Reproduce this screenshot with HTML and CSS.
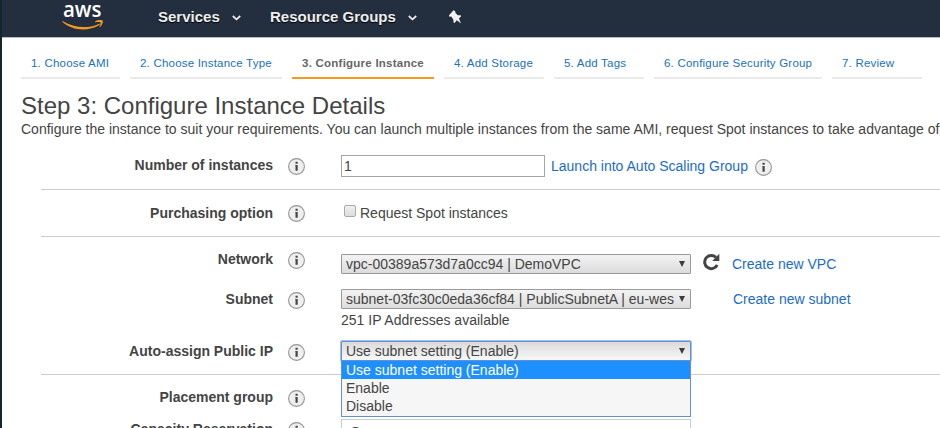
FILE: index.html
```html
<!DOCTYPE html>
<html lang="en">
<head>
<meta charset="utf-8">
<title>Configure Instance Details</title>
<link rel="stylesheet" href="styles.css">
</head>
<body>
<svg class="defs" width="0" height="0" aria-hidden="true">
  <symbol id="info" viewBox="0 0 17 17">
    <circle cx="8.5" cy="8.5" r="7.9" fill="#efefef" stroke="#959595" stroke-width="1.1"/>
    <path d="M7.500 3.700h2.200v2H7.500zM7.100 6.900h2.600v5.900H7.500V7.600h-.4z" fill="#444"/>
  </symbol>
</svg>
<div class="page">
  <header class="topbar">
    <svg class="logo" width="42" height="30" viewBox="0 -4 42 30">
      <text class="logo-text" x="1" y="13.400" textLength="38.500" lengthAdjust="spacingAndGlyphs">aws</text>
      <path d="M1 17.200C11.500 23.800 25.500 25 36.700 19.900c.9-.4 1.500.5.7 1.100C26.500 27.600 10.500 27 .5 18c-.5-.4 0-1.100.5-.8z" fill="#f7981f"/>
      <path d="M33.200 17.400c2.200-1.700 6.600-1.900 7.500-.8.700 1-.3 4.500-2.600 6.300-.5.400-.9.200-.6-.3.700-1.600 1.400-3.500 1-4-.6-.7-3.300-.5-4.900-.3-.5.100-.8-.6-.4-.9z" fill="#f7981f"/>
    </svg>
    <span class="nav services">Services</span>
    <svg class="chev c1" width="9" height="6" viewBox="0 0 9 6"><path d="M.8 1l3.700 3.400L8.200 1" fill="none" stroke="#eee" stroke-width="1.700"/></svg>
    <span class="nav groups">Resource Groups</span>
    <svg class="chev c2" width="9" height="6" viewBox="0 0 9 6"><path d="M.8 1l3.700 3.400L8.200 1" fill="none" stroke="#eee" stroke-width="1.700"/></svg>
    <svg class="pin" width="13" height="15" viewBox="0 0 13 15"><path d="M4.500.3l1.700.9.300 1.900 2.300 2.200 2.800-.1.600 1.100-2.300 2.200 2.200 4.900-4.300-3.100-2.200 2.800-1-.7-.3-2.800L2.200 6.600l-1.900.1L0 5.200z" fill="#f2f2f2"/></svg>
  </header>
  <nav class="tabs">
    <a class="tab t1"><span>1. Choose AMI</span></a>
    <a class="tab t2"><span>2. Choose Instance Type</span></a>
    <a class="tab t3 active"><span>3. Configure Instance</span></a>
    <a class="tab t4"><span>4. Add Storage</span></a>
    <a class="tab t5"><span>5. Add Tags</span></a>
    <a class="tab t6"><span>6. Configure Security Group</span></a>
    <a class="tab t7"><span>7. Review</span></a>
  </nav>
  <h1>Step 3: Configure Instance Details</h1>
  <p class="intro">Configure the instance to suit your requirements. You can launch multiple instances from the same AMI, request Spot instances to take advantage of</p>
  <div class="form">
    <div class="row number">
      <label>Number of instances</label><svg class="info"><use href="#info"/></svg>
      <div class="control"><div class="input">1</div><a class="launch">Launch into Auto Scaling Group</a><svg class="info"><use href="#info"/></svg></div>
    </div>
    <div class="row purchase">
      <label>Purchasing option</label><svg class="info"><use href="#info"/></svg>
      <div class="control"><i class="check"></i><span>Request Spot instances</span></div>
    </div>
    <div class="row network">
      <label>Network</label><svg class="info"><use href="#info"/></svg>
      <div class="control"><div class="select"><span>vpc-00389a573d7a0cc94 | DemoVPC</span><i class="arrow"></i></div>
        <svg class="refresh" width="18" height="18" viewBox="0 0 18 18"><path d="M13.900 4.300A6.600 6.600 0 1 0 15.200 12" fill="none" stroke="#444" stroke-width="3"/><path d="M17.300.8v7.100H10.200z" fill="#444"/></svg>
        <a class="vpc">Create new VPC</a></div>
    </div>
    <div class="row subnet">
      <label>Subnet</label><svg class="info"><use href="#info"/></svg>
      <div class="control"><div class="select"><span>subnet-03fc30c0eda36cf84 | PublicSubnetA | eu-wes</span><i class="arrow"></i></div><a class="new-subnet">Create new subnet</a></div>
      <div class="note">251 IP Addresses available</div>
    </div>
    <div class="row auto">
      <label>Auto-assign Public IP</label><svg class="info"><use href="#info"/></svg>
      <div class="control"><div class="select open"><span>Use subnet setting (Enable)</span><i class="arrow"></i>
        <div class="menu"><div class="option chosen">Use subnet setting (Enable)</div><div class="option">Enable</div><div class="option">Disable</div></div></div></div>
    </div>
    <div class="row placement">
      <label>Placement group</label><svg class="info"><use href="#info"/></svg>
    </div>
    <div class="row capacity">
      <label>Capacity Reservation</label><svg class="info"><use href="#info"/></svg>
      <div class="control"><div class="box">Open</div></div>
    </div>
  </div>
</div>
</body>
</html>
```
FILE: styles.css
```css
* { box-sizing: border-box; }
html, body { margin: 0; height: 428px; overflow: hidden; }
body { background: #fff; color: #444; font: 14px/18px "Liberation Sans", Arial, sans-serif; white-space: nowrap; }
.defs { position: absolute; }
.page { height: 428px; overflow: hidden; border-left: 2px solid #14262b; }
.topbar { height: 38px; background: #232f3e; border-bottom: 1px solid #b9bcc0; display: flex; align-items: flex-start; }
.logo { margin: 0 0 0 60px; flex: none; overflow: visible; }
.logo-text { font: 22px "Open Sans", sans-serif; font-weight: 600; fill: #fff; }
.nav { color: #eee; font-weight: bold; font-size: 15px; margin-top: 8px; text-shadow: 0 1px 1px #000; flex: none; }
.services { width: 62px; margin-left: 54px; }
.groups { width: 126px; margin-left: 29px; }
.chev { margin-top: 15px; flex: none; }
.c1 { margin-left: 12px; }
.c2 { margin-left: 12px; }
.pin { margin: 10px 0 0 32px; flex: none; }
.tabs { display: flex; gap: 10px; padding-left: 19px; margin-top: 16px; height: 25px; }
.tab { height: 25px; border-bottom: 2px solid #eaeaea; color: #2171b8; font-size: 11.500px; letter-spacing: .21px; padding-left: 10px; flex: none; }
.tab.active { color: #666; font-weight: bold; border-color: #f7981f; letter-spacing: .24px; }
.t1 { width: 99px; } .t2 { width: 152px; } .t3 { width: 142px; } .t4 { width: 100px; }
.t5 { width: 90px; } .t6 { width: 168px; } .t7 { width: 90px; }
h1 { font-size: 24px; font-weight: normal; line-height: 28px; margin: 13px 0 0 19px; }
.intro { margin: 0 0 0 19px; }
.form { padding-left: 39px; margin-top: 4px; }
.row { display: grid; grid-template-columns: 232px 17px 1fr; column-gap: 15px; align-items: start; }
.row > label { text-align: right; font-weight: bold; margin-top: 14px; }
.info { width: 17px; height: 17px; margin-top: 15px; flex: none; }
.number > .info { margin-top: 16px; }
.control { display: flex; align-items: flex-start; margin-left: 21px; }
.number { height: 48px; border-bottom: 1px solid #ccc; }
.purchase { height: 47px; border-bottom: 1px solid #ccc; }
.input { width: 204px; height: 22px; margin: 13px 6px 0 0; border: 1px solid #a5a5a5; padding: 1px 2px; }
a { color: #1c6cc7; }
.launch { width: 198px; margin-top: 15px; }
.number .control .info { margin: 17px 0 0 6px; }
.check { width: 12px; height: 12px; margin: 15px 4px 0 3px; border: 1px solid #aaa; border-radius: 2px; background: linear-gradient(#f0f0f0, #dcdcdc); }
.purchase span { margin-top: 14px; }
.network { height: 40px; }
.network > label, .subnet > label, .auto > label { margin-top: 13px; }
.placement > label { margin-top: 13px; }
.select { position: relative; width: 350px; height: 20px; border: 1px solid #999; border-radius: 1px; background: linear-gradient(#f3f3f3, #dcdcdc); padding: 0 4px; flex: none; }
.network .select { margin-top: 17px; }
.arrow { position: absolute; right: 5px; top: 6px; border: solid transparent; border-width: 6px 3.500px 0; border-top-color: #3c3c3c; }
.refresh { margin: 16px 0 0 11px; }
.vpc { margin: 18px 0 0 12px; }
.subnet { height: 52px; grid-template-rows: 34px 18px; }
.subnet .select { margin-top: 12px; }
.new-subnet { margin: 13px 0 0 42px; }
.note { grid-column: 3; margin-left: 21px; }
.auto { height: 46px; border-bottom: 1px solid #ccc; }
.auto .select { margin-top: 12px; }
.open { border-color: #668fd3; outline: 1px solid #a0bff5; outline-offset: 0; background: linear-gradient(#dadada, #f8f8f8); }
.menu { position: absolute; z-index: 2; top: 18px; left: -1px; width: 350px; height: 57px; background: #f6f6f6; border: 1px solid #668fd3; }
.option { height: 18px; line-height: 18px; padding-left: 4px; }
.chosen { background: #1e8fff; color: #fff; }
.placement { height: 32px; }
.capacity > label { margin-top: 13px; }
.capacity .box { width: 350px; height: 25px; border: 1px solid #ccc; margin-top: 12px; padding: 3px 8px; }
```
